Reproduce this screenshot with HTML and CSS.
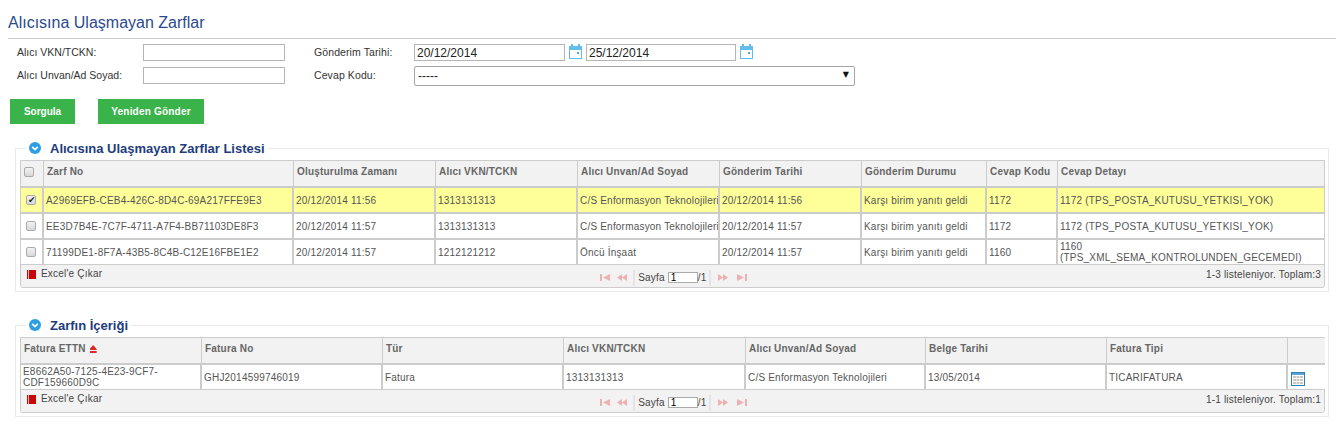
FILE: index.html

```html
<!DOCTYPE html>
<html lang="tr">
<head>
  <meta charset="UTF-8">
  <title>Alıcısına Ulaşmayan Zarflar</title>
  <link rel="stylesheet" href="styles.css">
</head>
<body>
  <svg class="defs" width="0" height="0">
    <symbol id="i-cal" viewBox="0 0 13 15">
      <rect x="0.5" y="2.5" width="12" height="12" fill="#fff" stroke="#62bdea"/>
      <rect x="0" y="2" width="13" height="4" fill="#62bdea"/>
      <rect x="2" y="0" width="2" height="3" fill="#62bdea"/>
      <rect x="9" y="0" width="2" height="3" fill="#62bdea"/>
      <rect x="8" y="8" width="2" height="2" fill="#4aa9dc"/>
    </symbol>
    <symbol id="i-toggle" viewBox="0 0 12 12">
      <circle cx="6" cy="6" r="6" fill="#2c9fe4"/>
      <path d="M3.2 4.8 L6 7.6 L8.8 4.8" fill="none" stroke="#fff" stroke-width="1.7"/>
    </symbol>
    <symbol id="i-excel" viewBox="0 0 9 9">
      <rect x="0" y="0" width="9" height="9" fill="#c80808"/>
      <rect x="1" y="0" width="1" height="9" fill="#f2b0b0"/>
    </symbol>
    <symbol id="i-first" viewBox="0 0 10 7">
      <rect x="0" y="0" width="2" height="7"/><path d="M10 0 V7 L3 3.5 Z"/>
    </symbol>
    <symbol id="i-prev" viewBox="0 0 10 7">
      <path d="M5 0 V7 L0 3.5 Z M10 0 V7 L5 3.5 Z"/>
    </symbol>
    <symbol id="i-next" viewBox="0 0 10 7">
      <path d="M0 0 V7 L5 3.5 Z M5 0 V7 L10 3.5 Z"/>
    </symbol>
    <symbol id="i-last" viewBox="0 0 10 7">
      <path d="M0 0 V7 L7 3.5 Z"/><rect x="8" y="0" width="2" height="7"/>
    </symbol>
    <symbol id="i-detail" viewBox="0 0 14 14">
      <rect x="0.5" y="0.5" width="13" height="13" fill="#fff" stroke="#2f7fb5"/>
      <rect x="1" y="1" width="12" height="2" fill="#5aa5d6"/>
      <path d="M2 4h3v2H2z M5.5 4h3v2h-3z M9 4h3v2H9z M2 7h3v2H2z M5.5 7h3v2h-3z M9 7h3v2H9z M2 10h3v2H2z M5.5 10h3v2h-3z M9 10h3v2H9z" fill="#c9c9c0"/>
    </symbol>
  </svg>

  <h1 class="page-title">Alıcısına Ulaşmayan Zarflar</h1>

  <form class="filters">
    <div class="filter-row">
      <label class="lbl-a">Alıcı VKN/TCKN:</label>
      <input type="text" class="txt">
      <label class="lbl-b">Gönderim Tarihi:</label>
      <input type="text" class="date" value="20/12/2014">
      <svg class="cal"><use href="#i-cal"/></svg>
      <input type="text" class="date" value="25/12/2014">
      <svg class="cal"><use href="#i-cal"/></svg>
    </div>
    <div class="filter-row">
      <label class="lbl-a">Alıcı Unvan/Ad Soyad:</label>
      <input type="text" class="txt">
      <label class="lbl-b">Cevap Kodu:</label>
      <span class="select-wrap">
        <select class="combo"><option>-----</option></select>
      </span>
    </div>
  </form>

  <div class="actions">
    <button type="button" class="btn btn-query">Sorgula</button>
    <button type="button" class="btn btn-resend">Yeniden Gönder</button>
  </div>

  <fieldset class="panel">
    <legend><svg class="toggle"><use href="#i-toggle"/></svg>Alıcısına Ulaşmayan Zarflar Listesi</legend>
    <div class="grid">
      <table class="list-table">
        <colgroup>
          <col class="c-check"><col class="c-zarf"><col class="c-w"><col class="c-w"><col class="c-w"><col class="c-w"><col class="c-durum"><col class="c-kod"><col class="c-detay">
        </colgroup>
        <thead>
          <tr>
            <th class="check-head"><input type="checkbox" class="cb"></th>
            <th>Zarf No</th>
            <th>Oluşturulma Zamanı</th>
            <th>Alıcı VKN/TCKN</th>
            <th>Alıcı Unvan/Ad Soyad</th>
            <th>Gönderim Tarihi</th>
            <th>Gönderim Durumu</th>
            <th>Cevap Kodu</th>
            <th>Cevap Detayı</th>
          </tr>
        </thead>
        <tbody>
          <tr class="selected">
            <td class="check-cell"><input type="checkbox" class="cb" checked></td>
            <td>A2969EFB-CEB4-426C-8D4C-69A217FFE9E3</td>
            <td>20/12/2014 11:56</td>
            <td>1313131313</td>
            <td>C/S Enformasyon Teknolojileri</td>
            <td>20/12/2014 11:56</td>
            <td>Karşı birim yanıtı geldi</td>
            <td>1172</td>
            <td>1172 (TPS_POSTA_KUTUSU_YETKISI_YOK)</td>
          </tr>
          <tr>
            <td class="check-cell"><input type="checkbox" class="cb"></td>
            <td>EE3D7B4E-7C7F-4711-A7F4-BB71103DE8F3</td>
            <td>20/12/2014 11:57</td>
            <td>1313131313</td>
            <td>C/S Enformasyon Teknolojileri</td>
            <td>20/12/2014 11:57</td>
            <td>Karşı birim yanıtı geldi</td>
            <td>1172</td>
            <td>1172 (TPS_POSTA_KUTUSU_YETKISI_YOK)</td>
          </tr>
          <tr class="last">
            <td class="check-cell"><input type="checkbox" class="cb"></td>
            <td>71199DE1-8F7A-43B5-8C4B-C12E16FBE1E2</td>
            <td>20/12/2014 11:57</td>
            <td>1212121212</td>
            <td>Öncü İnşaat</td>
            <td>20/12/2014 11:57</td>
            <td>Karşı birim yanıtı geldi</td>
            <td>1160</td>
            <td>1160<br>(TPS_XML_SEMA_KONTROLUNDEN_GECEMEDI)</td>
          </tr>
        </tbody>
      </table>
      <div class="grid-foot">
        <a class="export"><svg class="excel"><use href="#i-excel"/></svg>Excel'e Çıkar</a>
        <div class="pager">
          <svg class="pg pg-first"><use href="#i-first"/></svg>
          <svg class="pg pg-prev"><use href="#i-prev"/></svg>
          <span class="pg-sep"></span>
          <span class="pg-label">Sayfa</span>
          <input type="text" class="pg-input" value="1">
          <span class="pg-total">/1</span>
          <span class="pg-sep"></span>
          <svg class="pg pg-next"><use href="#i-next"/></svg>
          <svg class="pg pg-last"><use href="#i-last"/></svg>
        </div>
        <div class="count">1-3 listeleniyor. Toplam:3</div>
      </div>
    </div>
  </fieldset>

  <fieldset class="panel panel-second">
    <legend><svg class="toggle"><use href="#i-toggle"/></svg>Zarfın İçeriği</legend>
    <div class="grid">
      <table class="list-table">
        <colgroup>
          <col class="d-w"><col class="d-w"><col class="d-w"><col class="d-x"><col class="d-y"><col class="d-w"><col class="d-w"><col class="d-icon">
        </colgroup>
        <thead>
          <tr>
            <th>Fatura ETTN <span class="sort"></span></th>
            <th>Fatura No</th>
            <th>Tür</th>
            <th>Alıcı VKN/TCKN</th>
            <th>Alıcı Unvan/Ad Soyad</th>
            <th>Belge Tarihi</th>
            <th>Fatura Tipi</th>
            <th></th>
          </tr>
        </thead>
        <tbody>
          <tr class="last">
            <td>E8662A50-7125-4E23-9CF7-<br>CDF159660D9C</td>
            <td>GHJ2014599746019</td>
            <td>Fatura</td>
            <td>1313131313</td>
            <td>C/S Enformasyon Teknolojileri</td>
            <td>13/05/2014</td>
            <td>TICARIFATURA</td>
            <td class="icon-cell"><svg class="detail"><use href="#i-detail"/></svg></td>
          </tr>
        </tbody>
      </table>
      <div class="grid-foot grid-foot-short">
        <a class="export"><svg class="excel"><use href="#i-excel"/></svg>Excel'e Çıkar</a>
        <div class="pager">
          <svg class="pg pg-first"><use href="#i-first"/></svg>
          <svg class="pg pg-prev"><use href="#i-prev"/></svg>
          <span class="pg-sep"></span>
          <span class="pg-label">Sayfa</span>
          <input type="text" class="pg-input" value="1">
          <span class="pg-total">/1</span>
          <span class="pg-sep"></span>
          <svg class="pg pg-next"><use href="#i-next"/></svg>
          <svg class="pg pg-last"><use href="#i-last"/></svg>
        </div>
        <div class="count">1-1 listeleniyor. Toplam:1</div>
      </div>
    </div>
  </fieldset>
</body>
</html>
```

FILE: styles.css

```css
body {
  margin: 0;
  background: #fff;
  font-family: "Liberation Sans", Arial, sans-serif;
  font-size: 10px;
  color: #444;
}
.defs {
  position: absolute;
}
.page-title {
  margin: 0 4px 0 8px;
  height: 38px;
  line-height: 45px;
  font-size: 16px;
  font-weight: normal;
  color: #2b4a8e;
  border-bottom: 1px solid #ccc;
}

/* filter form */
.filters {
  padding: 5px 0 0 17px;
}
.filter-row {
  display: flex;
  align-items: flex-start;
  height: 23px;
}
.lbl-a {
  width: 126px;
  font-size: 10.5px;
  line-height: 17px;
  color: #333;
}
.lbl-b {
  width: 100px;
  margin-left: 29px;
  font-size: 10.5px;
  letter-spacing: 0.1px;
  line-height: 17px;
  color: #333;
}
.txt {
  width: 142px;
  height: 17px;
  box-sizing: border-box;
  border: 1px solid #b5b5b5;
  padding: 0 2px;
}
.date {
  width: 151px;
  height: 17px;
  box-sizing: border-box;
  border: 1px solid #b5b5b5;
  padding: 0 2px;
  font-family: "Liberation Sans", Arial, sans-serif;
  font-size: 12px;
  color: #222;
}
.date:last-of-type {
  width: 150px;
}
.cal {
  width: 13px;
  height: 15px;
  margin: 0 4px;
}
.select-wrap {
  position: relative;
  display: block;
  margin-top: -1px;
}
.select-wrap::after {
  content: "▼";
  position: absolute;
  right: 6px;
  top: 4px;
  font-family: "DejaVu Sans", sans-serif;
  font-size: 8px;
  color: #111;
  pointer-events: none;
}
.combo {
  appearance: none;
  display: block;
  width: 441px;
  height: 20px;
  border: 1px solid #a6a6a6;
  border-radius: 2px;
  background: #fff;
  padding: 0 3px;
  font-family: "Liberation Sans", Arial, sans-serif;
  font-size: 12px;
  color: #222;
}

.actions {
  display: flex;
  padding: 9px 0 0 10px;
}
.btn {
  height: 25px;
  border: none;
  background: #39b34a;
  color: #fff;
  font-family: "Liberation Sans", Arial, sans-serif;
  font-size: 10px;
  font-weight: bold;
  letter-spacing: 0.2px;
}
.btn-query {
  width: 65px;
  margin-right: 23px;
  letter-spacing: 0;
}
.btn-resend {
  width: 106px;
}

/* panels */
.panel {
  margin: 15px 11px 0 15px;
  padding: 3px 3px 3px 4px;
  border: 1px solid #eaeaea;
  min-width: 0;
}
.panel-second {
  margin-top: 24px;
}
.panel legend {
  display: flex;
  align-items: center;
  height: 18px;
  margin-left: 6px;
  padding: 0 3px;
  font-size: 13px;
  font-weight: bold;
  color: #1d3c7d;
}
.toggle {
  width: 12px;
  height: 12px;
  margin-right: 9px;
}
.grid {
  border: 1px solid #ccc;
  border-radius: 0 0 3px 3px;
}
.list-table {
  width: 100%;
  table-layout: fixed;
  border-collapse: separate;
  border-spacing: 0;
}
.c-check { width: 23px; }
.c-zarf { width: 250px; }
.c-w { width: 142px; }
.c-durum { width: 125px; }
.c-kod { width: 71px; }
.d-w { width: 181px; }
.d-x { width: 182px; }
.d-y { width: 180px; }
.d-icon { width: 37px; }

.list-table th {
  height: 21px;
  padding: 0 2px 4px 3px;
  background: #f2f2f2;
  border-right: 1px solid #ccc;
  border-bottom: 2px solid #ccc;
  font-size: 10px;
  font-weight: bold;
  text-align: left;
  color: #666;
  letter-spacing: 0.2px;
}
.list-table td {
  height: 24px;
  padding: 0 0 0 2px;
  border-right: 2px solid #ccc;
  border-bottom: 2px solid #ccc;
  background: #fff;
  line-height: 11px;
  color: #555;
  letter-spacing: 0.2px;
  overflow: hidden;
  white-space: nowrap;
}
.list-table th:last-child,
.list-table td:last-child {
  border-right: none;
}
.list-table tr.selected td {
  background: #ffff99;
}
.list-table tr.last td {
  height: 24px;
  border-bottom: 1px solid #ccc;
}
.check-head {
  padding: 0 0 4px 2px;
}
.check-cell {
  text-align: center;
}
.icon-cell {
  text-align: left;
}
.cb {
  appearance: none;
  display: block;
  position: relative;
  width: 10px;
  height: 10px;
  margin: 0 0 0 3px;
  border: 1px solid #aaa;
  border-radius: 2px;
  background: linear-gradient(#f2f2f2, #d8d8d8);
}
.check-head .cb {
  margin-left: 0;
}
.cb:checked::before {
  content: "✔";
  position: absolute;
  left: 1px;
  top: -1px;
  font-family: "DejaVu Sans", sans-serif;
  font-size: 9px;
  line-height: 11px;
  color: #222;
}
.sort {
  display: inline-block;
  width: 7px;
  height: 8px;
  margin-left: 1px;
  vertical-align: -1px;
  background: linear-gradient(#d92b2b 0 60%, #fff 60% 72%, #d92b2b 72%);
  clip-path: polygon(50% 0, 100% 50%, 100% 100%, 0 100%, 0 50%);
}
.detail {
  display: block;
  width: 14px;
  height: 14px;
  margin: 4px 0 0 1px;
}

/* grid footer */
.grid-foot {
  display: grid;
  grid-template-columns: 1fr auto 1fr;
  align-items: start;
  height: 22px;
  background: #f2f2f2;
  border-radius: 0 0 3px 3px;
}
.grid-foot-short {
  height: 22px;
}
.export {
  display: flex;
  align-items: center;
  padding: 3px 0 0 6px;
  line-height: 12px;
  color: #444;
  letter-spacing: 0.2px;
}
.excel {
  width: 9px;
  height: 9px;
  margin-right: 5px;
}
.pager {
  display: flex;
  align-items: center;
  height: 17px;
  margin: 4px 0 0 2px;
  color: #444;
  letter-spacing: 0.2px;
}
.pg {
  width: 10px;
  height: 7px;
  fill: #eeb1b1;
}
.pg-prev {
  margin: 0 6px 0 7px;
}
.pg-next {
  margin: 0 9px 0 7px;
}
.pg-sep {
  width: 2px;
  height: 16px;
  background: #e4e4e4;
}
.pg-label {
  margin: 0 3px;
  font-size: 10px;
}
.pg-input {
  width: 30px;
  height: 11px;
  box-sizing: border-box;
  border: 1px solid #aaa;
  padding: 0 2px;
  font-family: "Liberation Sans", Arial, sans-serif;
  font-size: 10px;
}
.pg-total {
  width: 11px;
  font-size: 10px;
}
.count {
  padding: 4px 3px 0 0;
  text-align: right;
  color: #444;
  letter-spacing: 0.2px;
}
```
